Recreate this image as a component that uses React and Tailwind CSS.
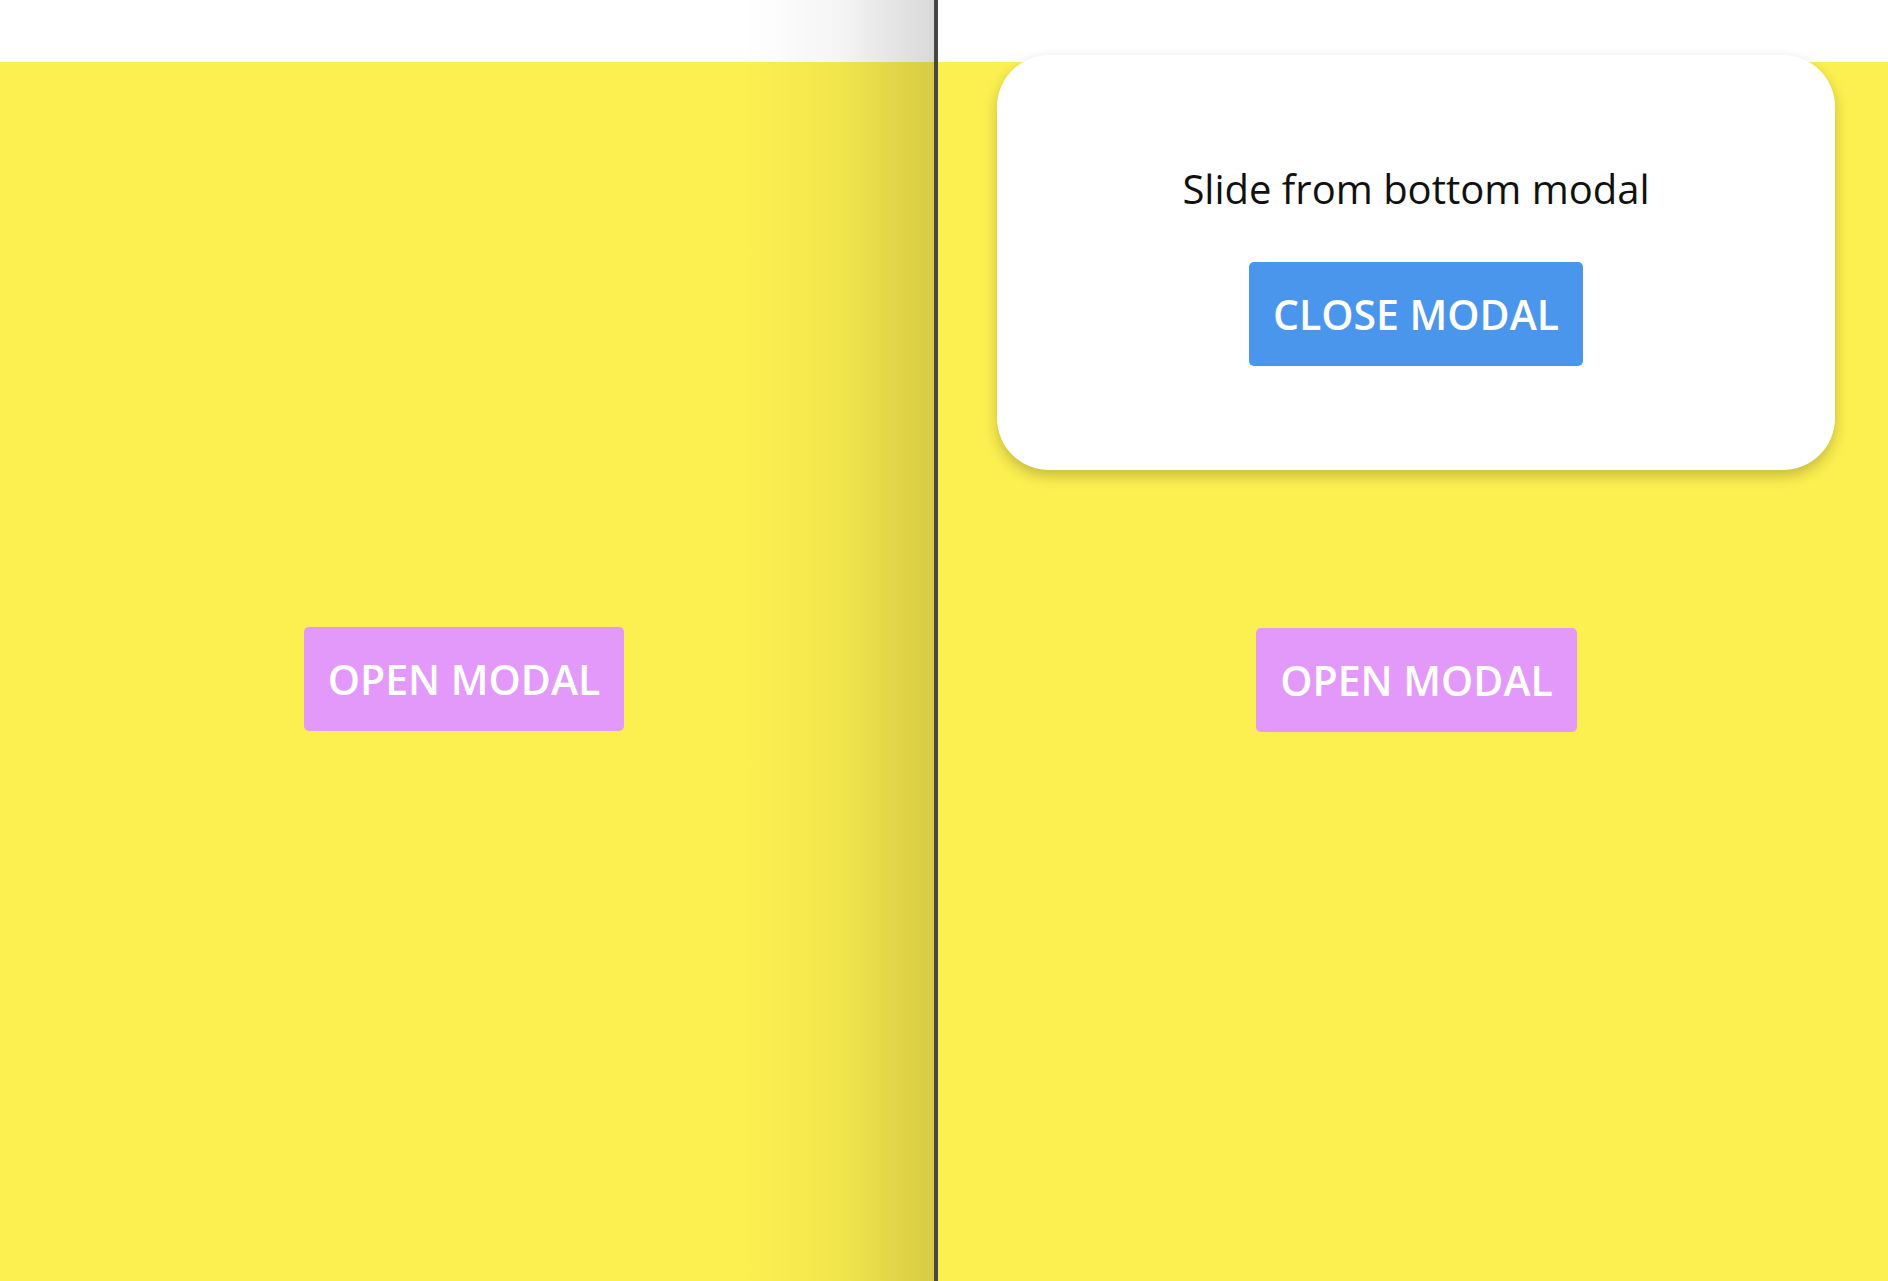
import React from 'react';

const font = { fontFamily: '"Open Sans", "Noto Sans", sans-serif' };

const OpenButton = () => (
  <button className="rounded-[5px] bg-[#e399f9] px-[24px] py-[24px] text-[41px] font-semibold leading-[56px] text-white">
    OPEN MODAL
  </button>
);

export default function App() {
  return (
    <div style={font} className="flex h-[1281px] w-[1888px] overflow-hidden bg-[#fcef50]">
      {/* left screen, sliding away */}
      <div className="relative flex w-[934px] flex-col">
        <div className="h-[62px] bg-white" />
        <div className="flex flex-1 justify-center bg-[#fcef50] pr-[6px] pt-[565px]">
          <div>
            <OpenButton />
          </div>
        </div>
        <div className="pointer-events-none absolute right-0 top-0 h-full w-[190px] bg-gradient-to-r from-transparent via-black/[0.04] to-black/15" />
      </div>

      <div className="w-[4px] bg-[#474747]" />

      {/* right screen with the modal */}
      <div className="relative flex flex-1 flex-col">
        <div className="h-[62px] bg-white" />
        <div className="flex flex-1 justify-center bg-[#fcef50] pl-[7px] pt-[566px]">
          <div>
            <OpenButton />
          </div>
        </div>

        <div className="absolute left-[59px] top-[55px] flex h-[415px] w-[838px] flex-col items-center rounded-[52px] bg-white pt-[106px] shadow-[0_6px_14px_rgba(0,0,0,0.22)]">
          <p className="text-[40px] leading-[55px] text-[#111]">Slide from bottom modal</p>
          <button className="mt-[46px] rounded-[5px] bg-[#4a96ec] px-[24px] py-[24px] text-[41px] font-semibold leading-[56px] text-white">
            CLOSE MODAL
          </button>
        </div>
      </div>
    </div>
  );
}
